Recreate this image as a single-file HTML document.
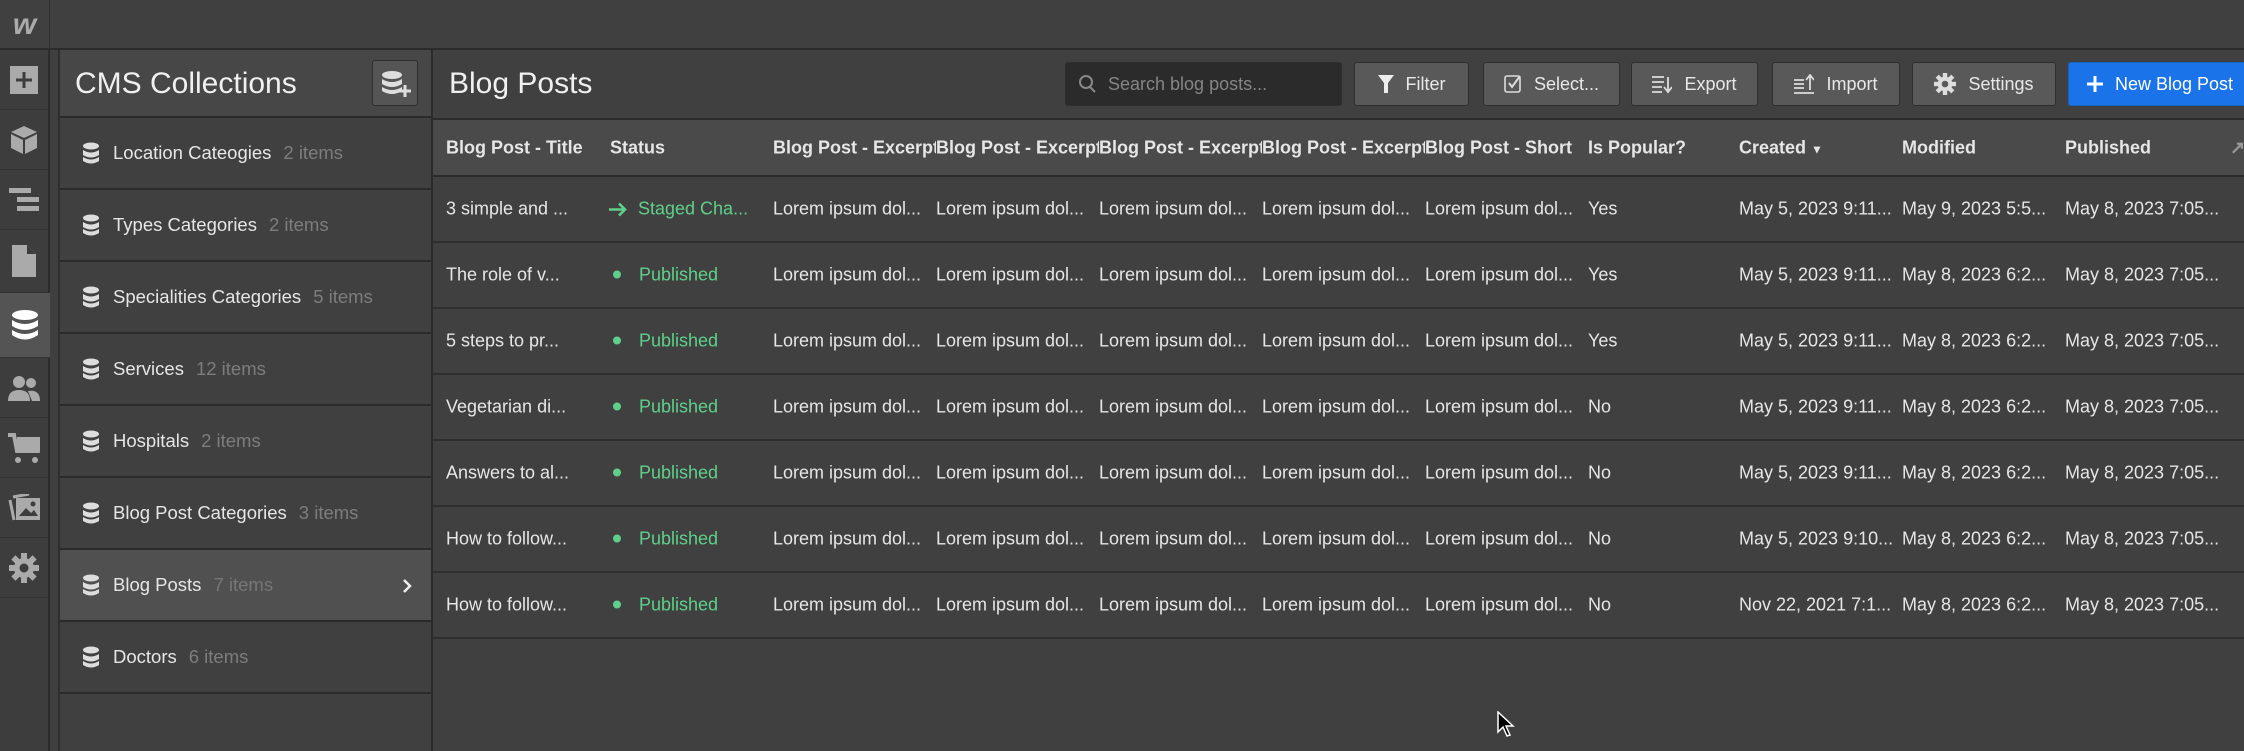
<!DOCTYPE html>
<html><head><meta charset="utf-8"><style>
*{box-sizing:border-box;margin:0;padding:0}
body{width:2244px;height:751px;background:#404040;font-family:"Liberation Sans",sans-serif;color:#e6e6e6;position:relative;overflow:hidden}
.a{position:absolute}
.top{left:0;top:0;width:2244px;height:50px;background:#404040;border-bottom:2px solid #2b2b2b}
.rail{left:0;top:50px;width:50px;height:701px;background:#3d3d3d;border-right:2px solid #2b2b2b}
.ri{position:absolute;left:0;width:48px;height:60px;border-bottom:1px solid #333;display:flex;align-items:center;justify-content:center}
.gap{left:50px;top:50px;width:10px;height:701px;background:#3f3f3f;border-right:2px solid #2e2e2e}
.panel{left:60px;top:50px;width:373px;height:701px;background:#404040;border-right:2px solid #2b2b2b}
.ph{height:68px;background:#474747;border-bottom:2px solid #2b2b2b;position:relative}
.ci{height:72px;border-bottom:2px solid #2b2b2b;display:flex;align-items:center;padding-left:53px;font-size:18.5px;position:relative}
.ci svg{position:absolute;left:22px;top:24px}
.ci span{color:#7d7d7d;margin-left:12px}
.main{left:433px;top:50px;width:1811px;height:701px}
.btn{position:absolute;top:12px;height:44px;background:#595959;border:1px solid #2e2e2e;border-radius:3px;font-size:18px;display:flex;align-items:center;justify-content:center;gap:12px;color:#e8e8e8}
.th{position:absolute;top:68px;left:0;width:1811px;height:59px;background:#4a4a4a;border-top:2px solid #2b2b2b;border-bottom:2px solid #2b2b2b;font-weight:bold;font-size:18px}
.row{position:absolute;left:0;width:1811px;height:66px;border-bottom:2px solid #2e2e2e;font-size:18px}
.c{position:absolute;top:50%;transform:translateY(-50%);white-space:nowrap}
.g{color:#5fd08a}
.dot{display:inline-block;width:8px;height:8px;border-radius:50%;background:#5fd08a;margin:0 18px 2px 0;vertical-align:middle}
</style></head><body>
<div class="a top"></div>
<div class="a" style="left:0;top:0;width:50px;height:50px;border-right:1px solid #2e2e2e;display:flex;align-items:center;justify-content:center;font-weight:bold;font-style:italic;font-size:30px;color:#aaa">w</div>
<div class="a rail">
<div class="ri" style="top:0"><svg width="28" height="28"><rect width="28" height="28" fill="#aaa"/><path d="M14 6v16M6 14h16" stroke="#3d3d3d" stroke-width="3"/></svg></div>
<div class="ri" style="top:60px"><svg width="28" height="30" viewBox="0 0 28 30"><path d="M14 1L27 7 14 13 1 7z M1 9l12 6v14L1 23z M15 15l12-6v14l-12 6z" fill="#aaa"/></svg></div>
<div class="ri" style="top:120px"><svg width="30" height="28"><rect x="0" y="2" width="22" height="5" fill="#aaa"/><rect x="8" y="11" width="22" height="5" fill="#aaa"/><rect x="8" y="20" width="22" height="5" fill="#aaa"/></svg></div>
<div class="ri" style="top:180px;height:63px"><svg width="24" height="32"><path d="M0 0h15l9 9v23H0z" fill="#aaa"/><path d="M15 0v9h9" fill="#3d3d3d"/></svg></div>
<div class="ri" style="top:243px;height:65px;background:#545454;width:50px"><svg width="28" height="32" viewBox="0 0 28 32"><ellipse cx="14" cy="6" rx="13" ry="5" fill="#fff"/><path d="M1 11q13 8 26 0v6q-13 8-26 0z M1 21q13 8 26 0v5q-13 9-26 0z" fill="#fff"/></svg></div>
<div class="ri" style="top:308px"><svg width="32" height="26"><circle cx="11" cy="7" r="6" fill="#aaa"/><circle cx="23" cy="8" r="5" fill="#aaa"/><path d="M0 26q0-11 11-11t11 11z M20 16q12-2 12 10h-8z" fill="#aaa"/></svg></div>
<div class="ri" style="top:368px"><svg width="32" height="30"><path d="M0 2h6l3 16h21l2-12H9" fill="none" stroke="#aaa" stroke-width="4"/><rect x="9" y="7" width="21" height="10" fill="#aaa"/><circle cx="10" cy="27" r="3" fill="#aaa"/><circle cx="27" cy="27" r="3" fill="#aaa"/></svg></div>
<div class="ri" style="top:428px"><svg width="32" height="28"><path d="M2 6l4 20" stroke="#aaa" stroke-width="3"/><rect x="8" y="4" width="24" height="22" fill="#aaa"/><path d="M11 22l7-8 5 5 3-3 4 6z" fill="#3d3d3d"/><circle cx="25" cy="10" r="2.5" fill="#3d3d3d"/><path d="M5 3l16-3" stroke="#aaa" stroke-width="3"/></svg></div>
<div class="ri" style="top:488px"><svg width="30" height="30" viewBox="0 0 30 30"><g fill="#aaa"><circle cx="15" cy="15" r="10"/><rect x="12" y="0" width="6" height="30"/><rect x="0" y="12" width="30" height="6"/><rect x="12" y="0" width="6" height="30" transform="rotate(45 15 15)"/><rect x="12" y="0" width="6" height="30" transform="rotate(-45 15 15)"/></g><circle cx="15" cy="15" r="4.5" fill="#3d3d3d"/></svg></div>
</div>
<div class="a gap"></div>
<div class="a panel">
<div class="ph"><div class="a" style="left:15px;top:17px;font-size:30px;color:#f0f0f0">CMS Collections</div>
<div class="a" style="left:312px;top:10px;width:46px;height:46px;background:#555;border:1px solid #2e2e2e;border-radius:3px"><svg class="a" style="left:8px;top:10px" width="30" height="26"><ellipse cx="11" cy="4" rx="10" ry="4" fill="#ddd"/><path d="M1 8q10 6 20 0v5q-10 6-20 0z M1 16q10 6 20 0v4q-10 6-20 0z" fill="#ddd"/><path d="M24 14v12M18 20h12" stroke="#ddd" stroke-width="3"/></svg></div></div>
<div class="ci"><svg width="18" height="22"><ellipse cx="9" cy="4" rx="8" ry="3.5" fill="#ddd"/><path d="M1 8q8 5 16 0v5q-8 5-16 0z M1 15q8 5 16 0v4q-8 5-16 0z" fill="#ddd"/></svg>Location Cateogies<span>2 items</span></div>
<div class="ci"><svg width="18" height="22"><ellipse cx="9" cy="4" rx="8" ry="3.5" fill="#ddd"/><path d="M1 8q8 5 16 0v5q-8 5-16 0z M1 15q8 5 16 0v4q-8 5-16 0z" fill="#ddd"/></svg>Types Categories<span>2 items</span></div>
<div class="ci"><svg width="18" height="22"><ellipse cx="9" cy="4" rx="8" ry="3.5" fill="#ddd"/><path d="M1 8q8 5 16 0v5q-8 5-16 0z M1 15q8 5 16 0v4q-8 5-16 0z" fill="#ddd"/></svg>Specialities Categories<span>5 items</span></div>
<div class="ci"><svg width="18" height="22"><ellipse cx="9" cy="4" rx="8" ry="3.5" fill="#ddd"/><path d="M1 8q8 5 16 0v5q-8 5-16 0z M1 15q8 5 16 0v4q-8 5-16 0z" fill="#ddd"/></svg>Services<span>12 items</span></div>
<div class="ci"><svg width="18" height="22"><ellipse cx="9" cy="4" rx="8" ry="3.5" fill="#ddd"/><path d="M1 8q8 5 16 0v5q-8 5-16 0z M1 15q8 5 16 0v4q-8 5-16 0z" fill="#ddd"/></svg>Hospitals<span>2 items</span></div>
<div class="ci"><svg width="18" height="22"><ellipse cx="9" cy="4" rx="8" ry="3.5" fill="#ddd"/><path d="M1 8q8 5 16 0v5q-8 5-16 0z M1 15q8 5 16 0v4q-8 5-16 0z" fill="#ddd"/></svg>Blog Post Categories<span>3 items</span></div>
<div class="ci" style="background:#505050"><svg width="18" height="22"><ellipse cx="9" cy="4" rx="8" ry="3.5" fill="#ddd"/><path d="M1 8q8 5 16 0v5q-8 5-16 0z M1 15q8 5 16 0v4q-8 5-16 0z" fill="#ddd"/></svg>Blog Posts<span style="color:#777">7 items</span><svg style="left:342px;top:28px" width="10" height="16"><path d="M2 2l6 6-6 6" stroke="#eee" stroke-width="2.5" fill="none"/></svg></div>
<div class="ci"><svg width="18" height="22"><ellipse cx="9" cy="4" rx="8" ry="3.5" fill="#ddd"/><path d="M1 8q8 5 16 0v5q-8 5-16 0z M1 15q8 5 16 0v4q-8 5-16 0z" fill="#ddd"/></svg>Doctors<span>6 items</span></div>
</div>
<div class="a main">
<div class="a" style="left:16px;top:17px;font-size:30px;color:#f0f0f0">Blog Posts</div>
<div class="btn" style="left:632px;width:277px;background:#2b2b2b;justify-content:flex-start;padding-left:12px;color:#858585"><svg width="18" height="20"><circle cx="8" cy="8" r="6" stroke="#888" stroke-width="2" fill="none"/><path d="M12 13l5 5" stroke="#888" stroke-width="2"/></svg>Search blog posts...</div>
<div class="btn" style="left:921px;width:115px"><svg width="16" height="20"><path d="M0 1h16l-6 8v10h-4V9z" fill="#eee"/></svg>Filter</div>
<div class="btn" style="left:1050px;width:137px"><svg width="18" height="20"><rect x="1" y="2" width="15" height="16" rx="2" stroke="#ddd" stroke-width="1.6" fill="none"/><path d="M5 9l3 4 8-11" stroke="#ddd" stroke-width="2" fill="none"/></svg>Select...</div>
<div class="btn" style="left:1198px;width:127px"><svg width="20" height="20"><path d="M0 3h12M0 8h12M0 13h10M0 18h10M16 3v14M12 13l4 5 4-5" stroke="#ddd" stroke-width="1.8" fill="none"/></svg>Export</div>
<div class="btn" style="left:1339px;width:128px"><svg width="20" height="20"><path d="M0 6h10M0 10h10M0 14h10M0 19h20M16 16V2M12 6l4-5 4 5" stroke="#ddd" stroke-width="1.8" fill="none"/></svg>Import</div>
<div class="btn" style="left:1479px;width:144px"><svg width="22" height="22" viewBox="0 0 30 30"><g fill="#ddd"><circle cx="15" cy="15" r="10"/><rect x="12" y="0" width="6" height="30"/><rect x="0" y="12" width="30" height="6"/><rect x="12" y="0" width="6" height="30" transform="rotate(45 15 15)"/><rect x="12" y="0" width="6" height="30" transform="rotate(-45 15 15)"/></g><circle cx="15" cy="15" r="4.5" fill="#595959"/></svg>Settings</div>
<div class="btn" style="left:1635px;width:190px;background:#1a73e8;border-color:#1565c0;justify-content:flex-start;padding-left:18px;color:#fff"><svg width="16" height="16"><path d="M8 0v16M0 8h16" stroke="#fff" stroke-width="3"/></svg>New Blog Post</div>
<div class="th">
<div class="c" style="left:13px">Blog Post - Title</div><div class="c" style="left:177px">Status</div>
<div class="c" style="left:340px;width:163px;overflow:hidden">Blog Post - Excerpt</div>
<div class="c" style="left:503px;width:163px;overflow:hidden">Blog Post - Excerpt</div>
<div class="c" style="left:666px;width:163px;overflow:hidden">Blog Post - Excerpt</div>
<div class="c" style="left:829px;width:163px;overflow:hidden">Blog Post - Excerpt</div>
<div class="c" style="left:992px;width:163px;overflow:hidden">Blog Post - Short</div>
<div class="c" style="left:1155px">Is Popular?</div>
<div class="c" style="left:1306px">Created <span style="font-size:12px">▼</span></div>
<div class="c" style="left:1469px">Modified</div><div class="c" style="left:1632px">Published</div>
<div class="c" style="left:1797px;color:#999">↗</div>
</div>
<div id="rows"></div>
</div>
<svg class="a" style="left:1497px;top:711px" width="18" height="26"><path d="M1 1v20l5-5 4 9 3-1-4-9h7z" fill="#000" stroke="#fff" stroke-width="1.5"/></svg>
<script>
var d=[["3 simple and ...",1,"Yes","May 5, 2023 9:11...","May 9, 2023 5:5..."],["The role of v...",0,"Yes","May 5, 2023 9:11...","May 8, 2023 6:2..."],["5 steps to pr...",0,"Yes","May 5, 2023 9:11...","May 8, 2023 6:2..."],["Vegetarian di...",0,"No","May 5, 2023 9:11...","May 8, 2023 6:2..."],["Answers to al...",0,"No","May 5, 2023 9:11...","May 8, 2023 6:2..."],["How to follow...",0,"No","May 5, 2023 9:10...","May 8, 2023 6:2..."],["How to follow...",0,"No","Nov 22, 2021 7:1...","May 8, 2023 6:2..."]];
var h="";d.forEach(function(r,i){var L="Lorem ipsum dol...";h+='<div class="row" style="top:'+(127+i*66)+'px"><div class="c" style="left:13px">'+r[0]+'</div>'+(r[1]?'<div class="c g" style="left:175px"><svg width="20" height="16" style="vertical-align:middle;margin-right:10px"><path d="M1 8h16M11 2l6 6-6 6" stroke="#5fd08a" stroke-width="2.6" fill="none"/></svg>Staged Cha...</div>':'<div class="c g" style="left:180px"><span class="dot"></span>Published</div>');[340,503,666,829,992].forEach(function(x){h+='<div class="c" style="left:'+x+'px">'+L+'</div>'});h+='<div class="c" style="left:1155px">'+r[2]+'</div><div class="c" style="left:1306px">'+r[3]+'</div><div class="c" style="left:1469px">'+r[4]+'</div><div class="c" style="left:1632px">May 8, 2023 7:05...</div></div>'});document.getElementById("rows").innerHTML=h;
</script>
</body></html>
